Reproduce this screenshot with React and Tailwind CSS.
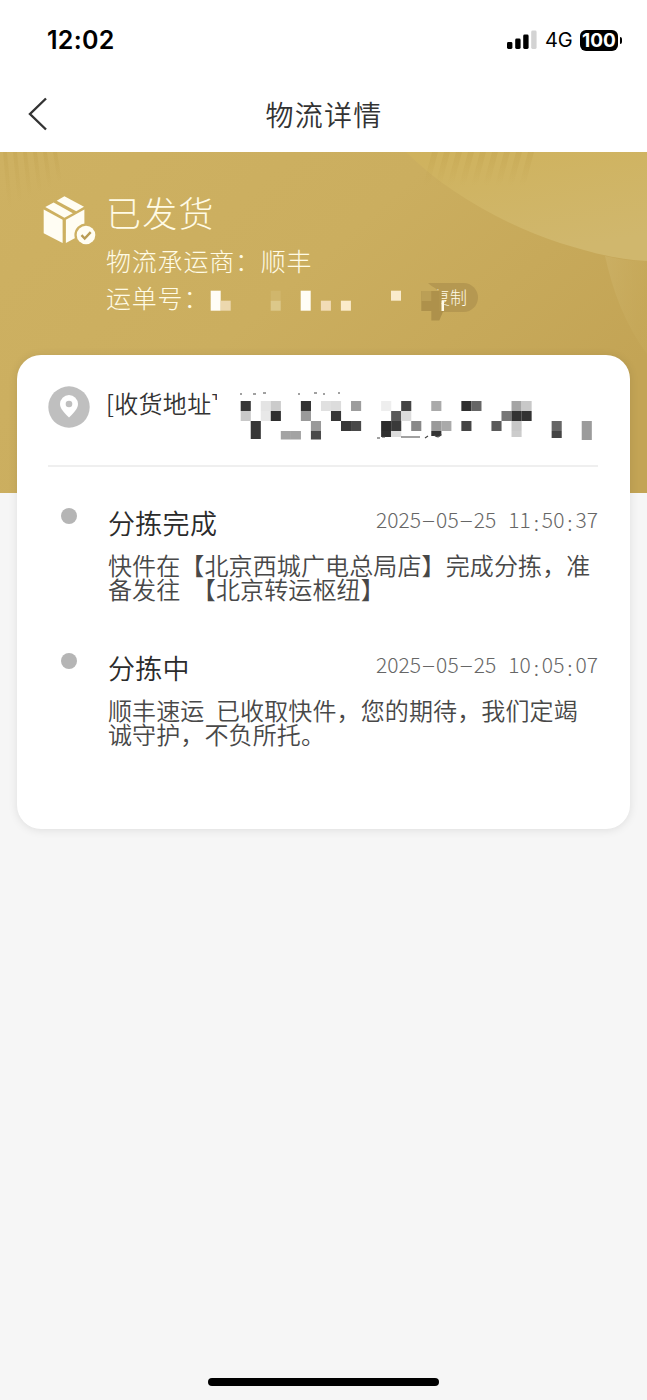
const GRID = 10;

// [column, row, colour, height]
const addressCells = [
  [0, 0, "#373737"], [2, 0, "#e4e4e4"], [3, 0, "#cbcbcb"], [6, 0, "#333333"], [8, 0, "#e0e0e0"], [9, 0, "#dcdcdc"],
  [11, 0, "#9d9d9d"], [14, 0, "#eeeeee"], [16, 0, "#444444"], [19, 0, "#aaaaaa"], [22, 0, "#303030"], [23, 0, "#666666"],
  [27, 0, "#a5a5a5"], [28, 0, "#c8c8c8"],
  [0, 1, "#c8c8c8"], [2, 1, "#e8e8e8"], [3, 1, "#2e2e2e"], [6, 1, "#9a9a9a"], [9, 1, "#363636"], [15, 1, "#5a5a5a"],
  [16, 1, "#dcdcdc"], [26, 1, "#777777"], [27, 1, "#333333"], [28, 1, "#333333"],
  [1, 2, "#363636"], [7, 2, "#999999"], [10, 2, "#383838"], [11, 2, "#484848"], [14, 2, "#2c2c2c"], [15, 2, "#3a3a3a"],
  [17, 2, "#888888"], [19, 2, "#9a9a9a"], [20, 2, "#aaaaaa"], [22, 2, "#454545"], [25, 2, "#5a5a5a"], [27, 2, "#c8c8c8"],
  [31, 2, "#666666"], [34, 2, "#9b9b9b"],
  [1, 3, "#363636", 8], [4, 3, "#a3a3a3", 8.5], [5, 3, "#a3a3a3", 8.5], [7, 3, "#4a4a4a", 8.5], [14, 3, "#303030", 6],
  [15, 3, "#dddddd", 6], [19, 3, "#333333", 5], [27, 3, "#cccccc", 6], [31, 3, "#444444", 7], [34, 3, "#9b9b9b", 9.5],
];

const events = [
  {
    title: "分拣完成",
    date: "2025–05–25",
    time: "11:50:37",
    lines: ["快件在【北京西城广电总局店】完成分拣，准", "备发往 【北京转运枢纽】"],
  },
  {
    title: "分拣中",
    date: "2025–05–25",
    time: "10:05:07",
    lines: ["顺丰速运 已收取快件，您的期待，我们定竭", "诚守护，不负所托。"],
  },
];

function StatusBar() {
  return (
    <div className="flex h-20 items-center justify-between pl-[47px] pr-[25px] font-['Inter',sans-serif] text-black">
      <span className="text-[25px] font-semibold leading-none tracking-[0.3px]">12:02</span>
      <div className="flex items-center font-normal">
        <svg width="30" height="20" viewBox="0 0 30 20">
          <rect x="0" y="12" width="5.4" height="7" rx="1.4" />
          <rect x="8.2" y="8.6" width="5.4" height="10.4" rx="1.4" />
          <rect x="16.2" y="4.6" width="5.4" height="14.4" rx="1.4" />
          <rect x="24.2" y="0.6" width="5.4" height="18.4" rx="1.4" fill="#d3d3d3" />
        </svg>
        <span className="ml-2 w-[35px] text-[20px] leading-none tracking-[-0.2px]">4G</span>
        <span className="flex h-[21px] w-[38px] items-center justify-center rounded-[6px] bg-black text-[19px] font-bold leading-none text-white">
          100
        </span>
        <span className="ml-[2px] h-[7px] w-[2px] rounded-r-full bg-black" />
      </div>
    </div>
  );
}

function NavBar() {
  return (
    <div className="flex h-[72px] items-center px-7 pb-1">
      <svg className="shrink-0" width="20" height="34" viewBox="0 0 20 34" fill="none" stroke="#333" strokeWidth="2.4">
        <path d="M18 1.5 2 17l16 15.5" />
      </svg>
      <h1 className="flex-1 pr-[19px] text-center text-[28px] leading-none tracking-[1.2px] text-[#333]">物流详情</h1>
    </div>
  );
}

function BannerArt() {
  return (
    <svg className="absolute inset-0" width="647" height="341" viewBox="0 0 647 341">
      <defs>
        <linearGradient id="gold" x1="0" y1="0" x2="1" y2="0.6">
          <stop offset="0" stopColor="#ceb162" />
          <stop offset="0.5" stopColor="#cbae5f" />
          <stop offset="1" stopColor="#c3a455" />
        </linearGradient>
        <linearGradient id="sweep" x1="0" y1="0" x2="0.4" y2="1">
          <stop offset="0" stopColor="#cfb25d" />
          <stop offset="1" stopColor="#d0b76d" />
        </linearGradient>
        <linearGradient id="fade" x1="0" y1="0" x2="0" y2="1">
          <stop offset="0" stopColor="#bd9d49" stopOpacity="0.3" />
          <stop offset="1" stopColor="#bd9d49" stopOpacity="0" />
        </linearGradient>
        <linearGradient id="edge" x1="0" y1="0" x2="1" y2="0.3">
          <stop offset="0" stopColor="#cdb268" stopOpacity="0.7" />
          <stop offset="1" stopColor="#c8ab5c" stopOpacity="0.4" />
        </linearGradient>
      </defs>
      <rect width="647" height="341" fill="url(#gold)" />
      <path d="M406 0C446 40 505 73 560 91c32 10 60 17 87 18V0Z" fill="url(#sweep)" />
      <path d="M605 104c8 36 20 68 42 98v-93c-16 0-29-2-42-5Z" fill="url(#edge)" />
      {[0, 1, 2, 3, 4, 5, 6, 7, 8].map((i) => (
        <path key={i} d={`M${432 + i * 12} 0h6l-9 34h-6Z`} fill="url(#fade)" />
      ))}
      {[0, 1, 2, 3, 4, 5].map((i) => (
        <path key={i} d={`M${3 + i * 10} 0h4l5 ${56 - i * 5}h-4Z`} fill="url(#fade)" />
      ))}
    </svg>
  );
}

function PackageIcon() {
  return (
    <svg className="mt-[43px] shrink-0" width="54" height="50" viewBox="43 195 54 50" fill="#fffdf3">
      <path d="M56.7 200.8 64.4 196.2 84 206.8 76.2 211.3Z" />
      <path d="M45.3 207 53.6 202.6 72.8 213.2 64.4 217.8Z" />
      <path d="M43.7 209.5 62.6 219.8V243L43.7 233.2Z" />
      <path d="M65.9 219.8 84.4 209.5V233L65.9 243Z" />
      <circle cx="86" cy="235" r="11.6" fill="#cdb062" />
      <circle cx="86" cy="235" r="9.3" />
      <path d="m81.5 235.2 3.2 3.3 6-6.3" fill="none" stroke="#b99c55" strokeWidth="2.4" />
    </svg>
  );
}

function TrackingNumber() {
  return (
    <svg className="mt-[7px] ml-[10px] shrink-0" width="218" height="40" viewBox="210 281 218 40">
      <rect x="210.7" y="290.7" width="10" height="20" fill="#fffdf6" />
      <rect x="220.7" y="300.7" width="10" height="10" fill="#ecd8ae" />
      <rect x="270.7" y="290.7" width="10" height="10" fill="#d0b66c" />
      <rect x="270.7" y="300.7" width="10" height="10" fill="#dcc88a" />
      <rect x="300.7" y="290.7" width="10" height="20" fill="#fffdf6" />
      <rect x="320.9" y="300.7" width="10" height="10" fill="#f2dcb6" />
      <rect x="340.9" y="300.7" width="10" height="10" fill="#fbebcb" />
      <rect x="391" y="290.7" width="10" height="10" fill="#f9ebcd" />
    </svg>
  );
}

function CopyButton() {
  return (
    <button className="relative flex h-[29px] w-[50px] items-center justify-end rounded-r-full bg-[#b59851] pb-[2px] pr-[11px] text-[17px] leading-none text-[#fffbe9]">
      <span className="whitespace-nowrap">复制</span>
      <svg className="absolute -left-[8px] top-0" width="28" height="40" viewBox="420 283 28 40">
        <path d="M420 283h8c3 3 6 4 11 8v21h-19Z" fill="#c8ab5d" />
        <path d="M421.3 291h20v20h-20Z" fill="#ae914b" />
        <path d="M421.3 291h10v10h-10Z" fill="#bb9f56" />
        <path d="M431.3 311h12l-4 9.5h-8Z" fill="#ae914b" />
        <path d="M439 291h2.5v20h-2.5Z" fill="#b1944d" />
        <path d="M441.5 301h2.5v10h-2.5Z" fill="#fffbe9" />
      </svg>
    </button>
  );
}

function Banner() {
  return (
    <section className="relative h-[341px] bg-[#cbae5f]">
      <BannerArt />
      <div className="relative flex pl-[43px] font-light text-[#fffbe6]">
        <PackageIcon />
        <div className="ml-[9px] pt-[41px]">
          <h2 className="text-[35px] leading-[38px] tracking-[1.3px]">已发货</h2>
          <p className="mt-[11px] text-[25px] leading-[37px] tracking-[0.8px]">物流承运商：顺丰</p>
          <div className="flex h-[36px] items-center">
            <p className="w-[94px] shrink-0 whitespace-nowrap text-[25px] leading-[35px] tracking-[0.8px]">运单号：</p>
            <TrackingNumber />
            <CopyButton />
          </div>
        </div>
      </div>
    </section>
  );
}

function AddressRow() {
  return (
    <div className="flex h-[110px] border-b-2 border-[#efefef]">
      <svg className="mt-[29px] shrink-0" width="42" height="42" viewBox="0 0 42 42">
        <circle cx="21" cy="21" r="20.7" fill="#bfbfbf" />
        <path d="M21 31.5C16 26.5 12 22.5 12 18a9 9 0 0 1 18 0c0 4.5-4 8.5-9 13.5Z" fill="#fff" />
        <circle cx="21" cy="18" r="3.3" fill="#bfbfbf" />
      </svg>
      <div className="ml-[16px] mt-[30px] flex h-8 w-[111px] shrink-0 text-[24px] leading-8 tracking-[0.3px] text-[#333]">
        <span className="whitespace-nowrap">[收货地址</span>
        <span className="h-[13px] overflow-hidden">]</span>
      </div>
      <svg className="ml-[11px] mt-[33px] shrink-0" width="370" height="50" viewBox="228 390 370 50">
        {addressCells.map(([col, row, fill, height]) => (
          <rect
            key={`${col}-${row}`}
            x={240.7 + col * GRID + col * 0.03}
            y={401 + row * GRID}
            width="10.1"
            height={height ?? GRID}
            fill={fill}
          />
        ))}
        <path
          d="M240 394h2m11 0h3m7-1h3m32 1h2m14-1h3m6 1h2m13-1h2M377 438h3m2-1h3m16 0h19m5 1 3-2m6-1c4 3 6 2 7-1"
          fill="none"
          stroke="#444"
          strokeWidth="1.2"
        />
      </svg>
    </div>
  );
}

function Timestamp({ date, time }) {
  return (
    <p className="-mt-[9px] flex gap-3 text-[21px] font-light leading-6 tracking-[0.05px] text-[#666]">
      <span className="flex">
        {date.split("–").map((part, i) => (
          <span key={i}>
            {i > 0 && (
              <span className="inline-block w-[15px] text-center font-['Inter',sans-serif] text-[22px] font-extralight leading-none">–</span>
            )}
            {part}
          </span>
        ))}
      </span>
      <span className="flex">
        {time.split(":").map((part, i) => (
          <span key={i}>
            {i > 0 && <span className="relative top-[3px] inline-block w-[11px] text-center">:</span>}
            {part}
          </span>
        ))}
      </span>
    </p>
  );
}

function EventRow({ event }) {
  return (
    <li className="flex h-[145px]">
      <span className="ml-[13px] size-4 shrink-0 rounded-full bg-[#b5b5b5]" />
      <div className="-mt-px ml-[31px] flex-1">
        <div className="flex h-8 items-center justify-between">
          <h3 className="text-[27px] leading-[32px] tracking-[0.3px] text-[#2b2b2b]">{event.title}</h3>
          <Timestamp date={event.date} time={event.time} />
        </div>
        <div className="mt-[14px] text-[24px] leading-6 tracking-[0.12px] text-[#484848] [word-spacing:6px]">
          {event.lines.map((line) => (
            <p key={line} className="whitespace-nowrap">{line}</p>
          ))}
        </div>
      </div>
    </li>
  );
}

export default function App() {
  return (
    <div className="flex h-[1400px] w-[647px] flex-col overflow-hidden bg-[#f6f6f6] font-['Noto_Sans_CJK_SC',sans-serif] font-[350]">
      <header className="shrink-0 bg-white">
        <StatusBar />
        <NavBar />
      </header>
      <Banner />
      <main className="relative mx-[17px] -mt-[138px] h-[474px] shrink-0 rounded-[24px] bg-white pl-[31px] pr-8 pt-[2px] shadow-[0_1px_10px_rgba(0,0,0,0.1)]">
        <AddressRow />
        <ul className="mt-[41px]">
          {events.map((event) => (
            <EventRow key={event.time} event={event} />
          ))}
        </ul>
      </main>
      <div className="mx-auto mb-[14px] mt-auto h-2 w-[231px] rounded-full bg-black" />
    </div>
  );
}
